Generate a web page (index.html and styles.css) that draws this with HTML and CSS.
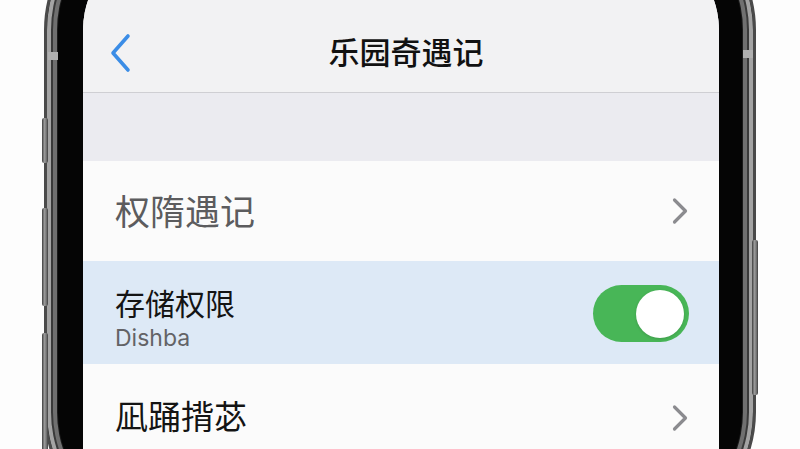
FILE: index.html
```html
<!DOCTYPE html>
<html lang="zh">
<head>
<meta charset="utf-8">
<title>乐园奇遇记</title>
<link rel="stylesheet" href="styles.css">
</head>
<body>
<div class="stage">
  <div class="phone">
    <span class="btn btn-l1"></span>
    <span class="btn btn-l2"></span>
    <span class="btn btn-l3"></span>
    <span class="btn btn-r1"></span>
    <span class="band band-l"></span>
    <span class="band band-r"></span>
    <div class="screen">
      <header class="nav">
        <div class="nav-bar">
          <svg class="back" viewBox="0 0 22 40" width="22" height="40" aria-hidden="true">
            <path d="M19 3 L4 20 L19 37" fill="none" stroke="#3b8de6" stroke-width="3.6" stroke-linecap="round" stroke-linejoin="round"/>
          </svg>
          <h1 class="title">乐园奇遇记</h1>
        </div>
      </header>
      <div class="spacer"></div>
      <div class="row row-1">
        <span class="label label-gray">权隋遇记</span>
        <svg class="chev" viewBox="0 0 18 28" width="18" height="28" aria-hidden="true">
          <path d="M3.5 3 L14.5 14 L3.5 25" fill="none" stroke="#8b8b8f" stroke-width="3.2" stroke-linecap="round" stroke-linejoin="round"/>
        </svg>
      </div>
      <div class="row row-2">
        <div class="stack">
          <span class="label label-mid">存储权限</span>
          <span class="sub">Dishba</span>
        </div>
        <div class="toggle"><span class="knob"></span></div>
      </div>
      <div class="row row-3">
        <span class="label label-big">凪踊揹苾</span>
        <svg class="chev" viewBox="0 0 18 28" width="18" height="28" aria-hidden="true">
          <path d="M3.5 3 L14.5 14 L3.5 25" fill="none" stroke="#8b8b8f" stroke-width="3.2" stroke-linecap="round" stroke-linejoin="round"/>
        </svg>
      </div>
    </div>
  </div>
</div>
</body>
</html>
```

FILE: styles.css
```css
* { box-sizing: border-box; }
html, body { margin: 0; padding: 0; }
body {
  width: 800px;
  height: 449px;
  overflow: hidden;
  background: #fdfdfd;
  font-family: "Noto Sans CJK SC", "Noto Sans", sans-serif;
}
.stage {
  width: 800px;
  height: 449px;
  overflow: hidden;
  display: flex;
  justify-content: flex-start;
  padding-left: 44px;
}
.phone {
  position: relative;
  width: 712px;
  height: 640px;
  margin-top: -99px;
  flex: none;
  background: #050505;
  border: 3px solid #4a4a4a;
  border-radius: 129px;
  box-shadow: inset 0 0 0 4px #a4a4a4, inset 0 0 0 6px #3a3a3a, inset 0 0 0 10px #707070, inset 0 0 0 11px #1a1a1a;
  padding: 36px 34px 0 36px;
}
.btn {
  position: absolute;
  width: 6px;
  background: linear-gradient(90deg, #3e3e3e, #9a9a9a 40%, #7a7a7a 70%, #3e3e3e);
  border-radius: 2px;
}
.btn-l1 { left: -5px; top: 214px; height: 45px; }
.btn-l2 { left: -5px; top: 304px; height: 98px; }
.btn-l3 { left: -5px; top: 429px; height: 131px; }
.btn-r1 { right: -5px; top: 336px; height: 155px; }
.band {
  position: absolute;
  width: 10px;
  height: 8px;
  background: #b0b0b0;
}
.band-l { left: 1px; top: 148px; }
.band-r { right: 0px; top: 146px; }

.screen {
  width: 636px;
  height: 600px;
  background: #fbfbfb;
  border-radius: 90px 90px 40px 40px;
  overflow: hidden;
  display: flex;
  flex-direction: column;
}
.nav {
  height: 153px;
  flex: none;
  background: #f2f2f3;
  border-bottom: 1px solid #cfcfd3;
  display: flex;
  align-items: flex-end;
}
.nav-bar {
  width: 100%;
  height: 84px;
  display: flex;
  align-items: center;
  justify-content: center;
  position: relative;
}
.back {
  position: absolute;
  left: 26px;
  top: 25px;
}
.title {
  margin: 0;
  font-size: 31px;
  font-weight: 500;
  color: #111;
  letter-spacing: 0;
  line-height: 1;
  margin-left: 10px;
}
.spacer {
  height: 68px;
  flex: none;
  background: #ebebf0;
}
.row {
  flex: none;
  display: flex;
  align-items: center;
  justify-content: space-between;
  padding: 0 30px 0 32px;
}
.row-1 { height: 100px; background: #fbfbfb; }
.row-2 { height: 103px; background: #dde9f6; }
.row-3 { height: 100px; background: #fbfbfb; }
.label {
  line-height: 1;
  font-weight: 400;
}
.label-gray { font-size: 35px; color: #5c5c5e; margin-top: -4px; }
.label-mid { font-size: 30px; color: #141414; }
.label-big { font-size: 33px; color: #141414; margin-top: 2px; }
.stack {
  display: flex;
  flex-direction: column;
  gap: 10px;
  margin-top: 12px;
}
.sub {
  font-family: "Inter", "Noto Sans", sans-serif;
  font-size: 23px;
  line-height: 1;
  color: #636366;
}
.chev { margin-right: 0; }
.row-3 .chev { margin-top: 8px; }
.toggle {
  width: 96px;
  height: 57px;
  border-radius: 29px;
  background: #48b657;
  display: flex;
  align-items: center;
  justify-content: flex-end;
  padding-right: 5px;
  margin-top: 2px;
}
.knob {
  width: 48px;
  height: 48px;
  border-radius: 50%;
  background: #fff;
  box-shadow: 0 1px 3px rgba(0,0,0,0.15);
}
```
